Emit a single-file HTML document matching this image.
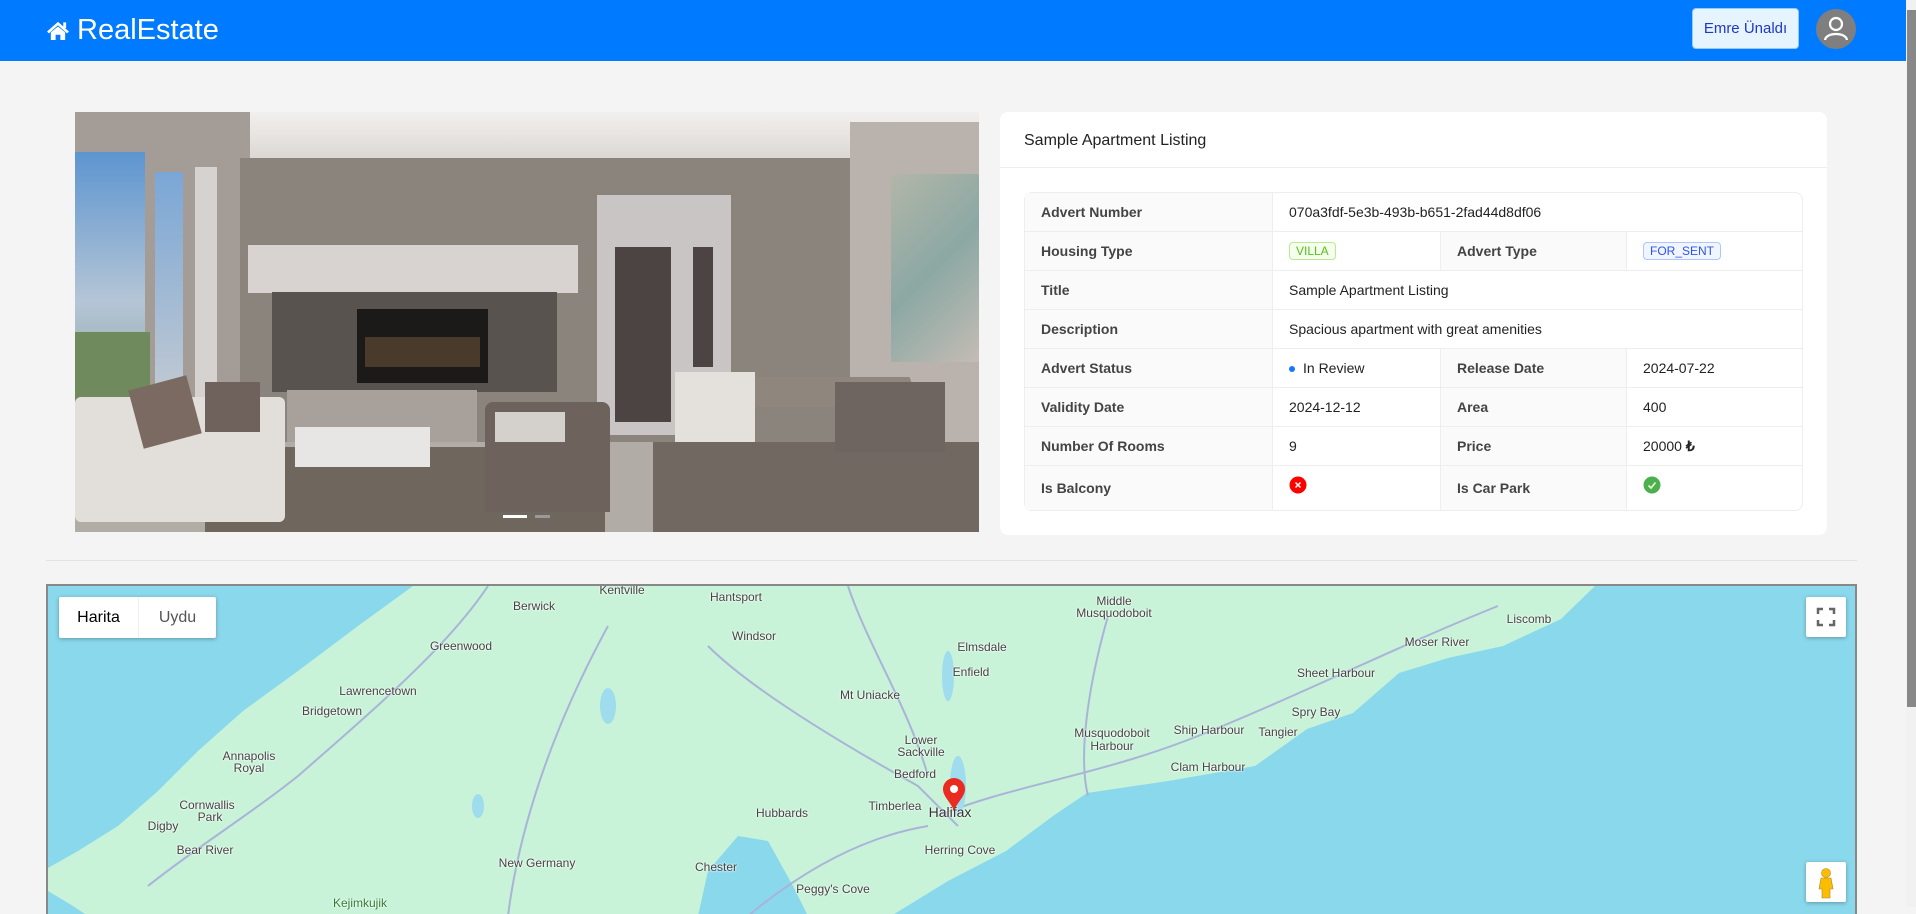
<!DOCTYPE html>
<html><head><meta charset="utf-8"><style>
*{box-sizing:border-box;margin:0;padding:0}
body{width:1916px;height:907px;overflow:hidden;background:#f4f4f4;font-family:"Liberation Sans",sans-serif;position:relative}
.hdr{position:absolute;left:0;top:0;width:1906px;height:61px;background:#007bff}
.logo{position:absolute;left:46px;top:10px;color:#fff;font-size:29px;line-height:40px;display:flex;align-items:center}
.btn{position:absolute;left:1692px;top:8px;width:107px;height:41px;background:#e6f4ff;border:1px solid #91caff;border-radius:4px;color:#1d39c4;font-size:15px;line-height:39px;text-align:center}
.av{position:absolute;left:1816px;top:9px;width:40px;height:40px;border-radius:50%;background:#7f7f7f}
.sb{position:absolute;left:1906px;top:0;width:10px;height:907px;background:#f1f1f1}
.sb i{position:absolute;left:1px;top:10px;width:9px;height:697px;background:#888}
.photo{position:absolute;left:75px;top:112px;width:904px;height:420px;overflow:hidden;background:#8a827a}
.photo div{position:absolute}
.card{position:absolute;left:1000px;top:112px;width:827px;height:423px;background:#fff;border-radius:8px}
.card h3{position:absolute;left:24px;top:20px;font-size:16px;font-weight:normal;color:#222}
.card .ln{position:absolute;left:0;top:55px;width:100%;height:1px;background:#eee}
table{position:absolute;left:24px;top:80px;width:779px;border-collapse:separate;border-spacing:0;border:1px solid #eee;border-radius:8px;font-size:14px;color:#222}
td{border-bottom:1px solid #eee;border-right:1px solid #eee;height:39px;padding:0 16px;vertical-align:middle}
tr:last-child td{border-bottom:none;height:44px}
td:last-child{border-right:none}
td.l{background:#fafafa;font-weight:bold;color:#444}
.tag{display:inline-block;font-size:12px;padding:1px 6px;border-radius:4px;border:1px solid}
.hr{position:absolute;left:46px;top:560px;width:1811px;height:1px;background:#e2e2e2}
.map{position:absolute;left:46px;top:584px;width:1811px;height:330px;border:2px solid #888;border-bottom:none;overflow:hidden;background:#c8f3d8}
.map .t{position:absolute;transform:translate(-50%,-50%);font-size:12px;color:#444;white-space:nowrap;text-shadow:0 0 2px #fff,0 0 2px #fff}
.ctl{position:absolute;background:#fff;box-shadow:0 1px 4px rgba(0,0,0,.3);border-radius:2px}
</style></head><body>
<div class="hdr">
 <div class="logo"><svg width="24" height="21" viewBox="0 0 25 22" style="margin-right:7px"><path d="M12.5 2 L1 12 L3 14 L12.5 5.5 L22 14 L24 12 Z" fill="#fff"/><path d="M5 13 L12.5 6.8 L20 13 V21 H15 V15.5 H10 V21 H5Z" fill="#fff"/><rect x="18" y="2.5" width="3" height="6" fill="#fff"/></svg>RealEstate</div>
 <div class="btn">Emre Ünaldı</div>
 <div class="av"><svg width="40" height="40" viewBox="0 0 40 40"><circle cx="20" cy="15" r="6" fill="none" stroke="#fff" stroke-width="2.2"/><path d="M9 31 C10 23 30 23 31 31" fill="none" stroke="#fff" stroke-width="2.2"/></svg></div>
</div>
<div class="sb"><i></i></div>

<div class="photo">
 <div style="left:0;top:0;width:904px;height:46px;background:linear-gradient(#f2f0ee,#dcd8d4)"></div>
 <div style="left:0;top:0;width:175px;height:330px;background:#a49c96"></div>
 <div style="left:0;top:40px;width:70px;height:250px;background:linear-gradient(#5d95d0,#b5c5d6 60%,#8ea4a0)"></div>
 <div style="left:80px;top:60px;width:28px;height:240px;background:linear-gradient(#7aa6d6,#c6ccd2)"></div>
 <div style="left:0;top:220px;width:75px;height:90px;background:#6f8a5c"></div>
 <div style="left:120px;top:55px;width:22px;height:270px;background:#d6d2d0"></div>
 <div style="left:165px;top:46px;width:610px;height:290px;background:#8b847d"></div>
 <div style="left:775px;top:10px;width:129px;height:370px;background:#b9b2ad"></div>
 <div style="left:816px;top:62px;width:88px;height:188px;background:linear-gradient(135deg,#b2b6a8,#8ca8a4 50%,#c4bcb4)"></div>
 <div style="left:173px;top:133px;width:330px;height:48px;background:#d8d2d0"></div>
 <div style="left:197px;top:180px;width:285px;height:100px;background:#58534f"></div>
 <div style="left:282px;top:197px;width:131px;height:74px;background:#1c1a19"></div>
 <div style="left:290px;top:225px;width:115px;height:30px;background:#4a3a2c"></div>
 <div style="left:212px;top:278px;width:190px;height:55px;background:#a8a09a"></div>
 <div style="left:522px;top:83px;width:134px;height:240px;background:#c9c5c4"></div>
 <div style="left:540px;top:135px;width:56px;height:175px;background:#4c4442"></div>
 <div style="left:618px;top:135px;width:20px;height:120px;background:#4c4442"></div>
 <div style="left:0;top:330px;width:904px;height:90px;background:#b2aca6"></div>
 <div style="left:130px;top:335px;width:400px;height:85px;background:#6f665e"></div>
 <div style="left:578px;top:330px;width:326px;height:90px;background:#716961"></div>
 <div style="left:0;top:285px;width:210px;height:125px;background:#e2ded9;border-radius:6px"></div>
 <div style="left:60px;top:270px;width:60px;height:60px;background:#7a6a62;transform:rotate(-15deg)"></div>
 <div style="left:130px;top:270px;width:55px;height:50px;background:#6f625c"></div>
 <div style="left:220px;top:315px;width:135px;height:40px;background:#e8e6e4"></div>
 <div style="left:410px;top:290px;width:125px;height:110px;background:#6e625c;border-radius:8px 8px 0 0"></div>
 <div style="left:420px;top:300px;width:70px;height:30px;background:#d4d0cc"></div>
 <div style="left:640px;top:265px;width:200px;height:30px;background:#8f867e;transform:skewX(20deg)"></div>
 <div style="left:600px;top:260px;width:80px;height:70px;background:#e4e0dc"></div>
 <div style="left:760px;top:270px;width:110px;height:70px;background:#6f6560"></div>
 <div style="left:428px;top:403px;width:24px;height:3px;background:#fff"></div>
 <div style="left:460px;top:403px;width:15px;height:3px;background:#999"></div>
</div>

<div class="card">
 <h3>Sample Apartment Listing</h3><div class="ln"></div>
 <table>
  <col style="width:248px"><col style="width:168px"><col style="width:186px"><col>
  <tr><td class="l">Advert Number</td><td colspan="3">070a3fdf-5e3b-493b-b651-2fad44d8df06</td></tr>
  <tr><td class="l">Housing Type</td><td><span class="tag" style="color:#52c41a;background:#f6ffed;border-color:#b7eb8f">VILLA</span></td><td class="l">Advert Type</td><td><span class="tag" style="color:#2f54eb;background:#f0f5ff;border-color:#adc6ff">FOR_SENT</span></td></tr>
  <tr><td class="l">Title</td><td colspan="3">Sample Apartment Listing</td></tr>
  <tr><td class="l">Description</td><td colspan="3">Spacious apartment with great amenities</td></tr>
  <tr><td class="l">Advert Status</td><td><span style="display:inline-block;width:6px;height:6px;border-radius:50%;background:#1677ff;margin-right:8px;vertical-align:middle"></span>In Review</td><td class="l">Release Date</td><td>2024-07-22</td></tr>
  <tr><td class="l">Validity Date</td><td>2024-12-12</td><td class="l">Area</td><td>400</td></tr>
  <tr><td class="l">Number Of Rooms</td><td>9</td><td class="l">Price</td><td>20000 <b>₺</b></td></tr>
  <tr><td class="l">Is Balcony</td><td><svg width="18" height="18" style="margin-top:-8px;vertical-align:middle"><circle cx="9" cy="9" r="8.5" fill="#f00"/><path d="M6.5 6.5L11.5 11.5M11.5 6.5L6.5 11.5" stroke="#fff" stroke-width="1.5"/></svg></td><td class="l">Is Car Park</td><td><svg width="18" height="18" style="margin-top:-8px;vertical-align:middle"><circle cx="9" cy="9" r="8.5" fill="#4caf50"/><path d="M5.5 9.5L8 12L12.5 6.5" stroke="#e8ffd0" stroke-width="1.6" fill="none"/></svg></td></tr>
 </table>
</div>
<div class="hr"></div>

<div class="map">
 <svg width="1811" height="330" style="position:absolute;left:0;top:0">
  <polygon points="0,0 365,0 310,40 250,85 195,125 150,165 110,205 70,240 30,265 0,282" fill="#8ad8ec"/>
  <polygon points="0,330 0,305 25,320 40,330" fill="#8ad8ec"/>
  <polygon points="843,330 900,295 958,265 1005,230 1039,207 1120,195 1207,180 1259,143 1305,127 1351,87 1400,72 1455,60 1513,33 1547,0 1811,0 1811,330" fill="#8ad8ec"/>
  <polygon points="650,330 660,285 690,250 720,255 745,300 760,330" fill="#8ad8ec"/>
  <g fill="none" stroke="#a9b4d8" stroke-width="2">
   <path d="M440 0 C400 60 330 120 250 190 C200 230 150 260 100 300"/>
   <path d="M660 60 C700 100 780 150 870 200 L910 240"/>
   <path d="M800 0 C820 60 860 120 880 190"/>
   <path d="M890 230 C960 200 1050 190 1150 150 C1250 110 1350 60 1450 20"/>
   <path d="M700 330 C760 280 820 250 880 240"/>
   <path d="M560 40 C500 150 470 250 460 330"/>
   <path d="M1060 30 C1040 100 1030 170 1040 210"/>
  </g>
  <g fill="#9fdcee"><ellipse cx="560" cy="120" rx="8" ry="18"/><ellipse cx="900" cy="90" rx="6" ry="25"/><ellipse cx="430" cy="220" rx="6" ry="12"/><ellipse cx="910" cy="200" rx="8" ry="30"/></g>
 </svg>
 <div class="t" style="left:574px;top:4px">Kentville</div><div class="t" style="left:486px;top:20px">Berwick</div><div class="t" style="left:688px;top:11px">Hantsport</div><div class="t" style="left:706px;top:50px">Windsor</div><div class="t" style="left:413px;top:60px">Greenwood</div><div class="t" style="left:330px;top:105px">Lawrencetown</div><div class="t" style="left:284px;top:125px">Bridgetown</div><div class="t" style="left:201px;top:170px">Annapolis</div><div class="t" style="left:201px;top:182px">Royal</div><div class="t" style="left:159px;top:219px">Cornwallis</div><div class="t" style="left:162px;top:231px">Park</div><div class="t" style="left:115px;top:240px">Digby</div><div class="t" style="left:157px;top:264px">Bear River</div><div class="t" style="left:489px;top:277px">New Germany</div><div class="t" style="left:668px;top:281px">Chester</div><div class="t" style="left:785px;top:303px">Peggy's Cove</div><div class="t" style="left:734px;top:227px">Hubbards</div><div class="t" style="left:847px;top:220px">Timberlea</div><div class="t" style="left:902px;top:226px;font-size:14px;color:#333">Halifax</div><div class="t" style="left:912px;top:264px">Herring Cove</div><div class="t" style="left:867px;top:188px">Bedford</div><div class="t" style="left:873px;top:154px">Lower</div><div class="t" style="left:873px;top:166px">Sackville</div><div class="t" style="left:822px;top:109px">Mt Uniacke</div><div class="t" style="left:923px;top:86px">Enfield</div><div class="t" style="left:934px;top:61px">Elmsdale</div><div class="t" style="left:1066px;top:15px">Middle</div><div class="t" style="left:1066px;top:27px">Musquodoboit</div><div class="t" style="left:1064px;top:147px">Musquodoboit</div><div class="t" style="left:1064px;top:160px">Harbour</div><div class="t" style="left:1161px;top:144px">Ship Harbour</div><div class="t" style="left:1230px;top:146px">Tangier</div><div class="t" style="left:1160px;top:181px">Clam Harbour</div><div class="t" style="left:1268px;top:126px">Spry Bay</div><div class="t" style="left:1288px;top:87px">Sheet Harbour</div><div class="t" style="left:1389px;top:56px">Moser River</div><div class="t" style="left:1481px;top:33px">Liscomb</div><div class="t" style="left:312px;top:317px;color:#2e7d32">Kejimkujik</div>
 <svg width="24" height="34" viewBox="0 0 24 34" style="position:absolute;left:894px;top:192px"><path d="M12 33 C9 24 1 19 1 11 A11 11 0 0 1 23 11 C23 19 15 24 12 33Z" fill="#ea2b1f"/><circle cx="12" cy="11" r="4" fill="#fff"/></svg>
 <div class="ctl" style="left:11px;top:11px;width:157px;height:41px;display:flex;font-size:16px;line-height:41px"><div style="width:80px;text-align:center;color:#000;font-weight:500;border-right:1px solid #eee">Harita</div><div style="flex:1;text-align:center;color:#555">Uydu</div></div>
 <div class="ctl" style="left:1758px;top:11px;width:40px;height:40px"><svg width="40" height="40"><path d="M12 17V12H17M23 12H28V17M28 23V28H23M17 28H12V23" fill="none" stroke="#666" stroke-width="2.5"/></svg></div>
 <div class="ctl" style="left:1758px;top:276px;width:40px;height:40px"><svg width="40" height="40"><circle cx="20" cy="11" r="4.5" fill="#fbbc04" stroke="#b0861f" stroke-width=".6"/><path d="M15 16H25L27 27H24V36H16V27H13Z" fill="#fbbc04" stroke="#b0861f" stroke-width=".6"/></svg></div>
</div>
</body></html>
